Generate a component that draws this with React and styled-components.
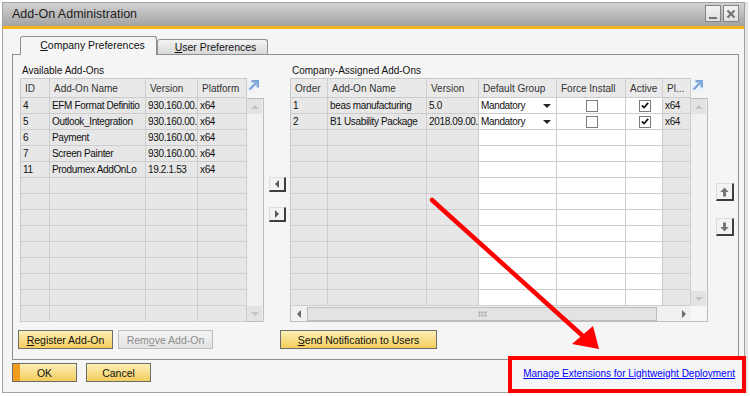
import React from "react";
import styled, { createGlobalStyle } from "styled-components";

const GlobalStyle = createGlobalStyle`
  body {
    margin: 0;
    background: #fff;
    font-family: "Liberation Sans", Arial, sans-serif;
    color: #111;
  }
`;

const leftCols = [29, 96, 52, 49];
const leftHead = ["ID", "Add-On Name", "Version", "Platform"];
const leftRows = [
  ["4", "EFM Format Definitio", "930.160.00.", "x64"],
  ["5", "Outlook_Integration", "930.160.00.", "x64"],
  ["6", "Payment", "930.160.00.", "x64"],
  ["7", "Screen Painter", "930.160.00.", "x64"],
  ["11", "Produmex AddOnLo", "19.2.1.53", "x64"],
];

const rightCols = [37, 99, 52, 78, 69, 37, 28];
const rightHead = ["Order", "Add-On Name", "Version", "Default Group", "Force Install", "Active", "Pl..."];
const rightWhite = [false, false, false, true, true, true, false];
const rightRows = [
  { order: "1", name: "beas manufacturing", version: "5.0", group: "Mandatory", force: false, active: true, pl: "x64" },
  { order: "2", name: "B1 Usability Package", version: "2018.09.00.", group: "Mandatory", force: false, active: true, pl: "x64" },
];

const Window = styled.div`
  position: relative;
  box-sizing: border-box;
  margin: 2px 0 0 2px;
  width: 743px;
  height: 391px;
  border: 1px solid #a2a2a2;
  background: #f5f5f5;
  display: flex;
  flex-direction: column;
  box-shadow: 3px 0 0 #e4e4e4;
`;

const TitleBar = styled.div`
  height: 23px;
  border-bottom: 3px solid #f6b41a;
  background: linear-gradient(#d2d2d2, #a3a3a3);
  display: flex;
  align-items: flex-start;
  padding: 0 5px 0 9px;
`;

const Title = styled.div`
  flex: 1;
  font-size: 12.5px;
  line-height: 23px;
  color: #1c1c1c;
`;

const WinButton = styled.div`
  box-sizing: border-box;
  width: 16px;
  height: 17px;
  margin: 2px 0 0 2px;
  border: 1px solid #838383;
  background: linear-gradient(#f4f4f4, #dedede);
  display: flex;
  align-items: center;
  justify-content: center;
`;

const Body = styled.div`
  flex: 1;
  padding: 7px 0 0 9px;
  display: flex;
  flex-direction: column;
`;

const TabStrip = styled.div`
  height: 18px;
  display: flex;
  align-items: flex-end;
  padding-left: 8px;
`;

const Tab = styled.div`
  position: relative;
  z-index: 1;
  box-sizing: border-box;
  width: ${(p) => p.$width}px;
  height: ${(p) => (p.$active ? 19 : 15)}px;
  margin-bottom: ${(p) => (p.$active ? -1 : 0)}px;
  border: 1px solid #8f8f8f;
  border-bottom: none;
  border-radius: 3px 3px 0 0;
  background: ${(p) => (p.$active ? "#f5f5f5" : "linear-gradient(#f3f3f3, #d9d9d9)")};
  font-size: 10.5px;
  display: flex;
  align-items: center;
  justify-content: center;
  padding-left: ${(p) => (p.$active ? 8 : 6)}px;
  padding-bottom: ${(p) => (p.$active ? 2 : 0)}px;
`;

const Panel = styled.div`
  box-sizing: border-box;
  width: 727px;
  height: 306px;
  border: 1px solid #8f8f8f;
  padding-top: 8px;
  display: flex;
  flex-direction: column;
`;

const ContentRow = styled.div`
  display: flex;
  align-items: flex-start;
  padding-left: 7px;
`;

const Section = styled.div`
  width: ${(p) => p.$width}px;
  display: flex;
  flex-direction: column;
`;

const Label = styled.div`
  font-size: 10px;
  line-height: 15px;
  padding-left: 2px;
`;

const GridFrame = styled.div`
  display: flex;
`;

const GridStack = styled.div`
  display: flex;
  flex-direction: column;
`;

const Grid = styled.div`
  display: grid;
  grid-template-columns: ${(p) => p.$cols.map((c) => c + "px").join(" ")};
  border-left: 1px solid #c9c9c9;
  border-top: 1px solid #c9c9c9;
`;

const HeadCell = styled.div`
  box-sizing: border-box;
  height: 19px;
  border-right: 1px solid #cdcdcd;
  border-bottom: 1px solid #cdcdcd;
  background: #e9e9e9;
  padding-left: 4px;
  font-size: 10px;
  color: #333;
  display: flex;
  align-items: center;
  white-space: nowrap;
  overflow: hidden;
`;

const Cell = styled.div`
  box-sizing: border-box;
  height: 16px;
  border-right: 1px solid #cdcdcd;
  border-bottom: 1px solid #cdcdcd;
  background: ${(p) => (p.$white ? "#fff" : "#e7e7e7")};
  padding: 0 1px 0 2px;
  font-size: 10px;
  letter-spacing: -0.35px;
  display: flex;
  align-items: center;
  justify-content: ${(p) => (p.$center ? "center" : "flex-start")};
  white-space: nowrap;
  overflow: hidden;
`;

const DropValue = styled.div`
  flex: 1;
  display: flex;
  align-items: center;
  justify-content: space-between;
  padding-right: 4px;
`;

const Check = styled.div`
  box-sizing: border-box;
  width: 12px;
  height: 12px;
  border: 1px solid #7b7b7b;
  background: #fff;
  display: flex;
  align-items: center;
  justify-content: center;
`;

const ScrollCol = styled.div`
  width: 17px;
  display: flex;
  flex-direction: column;
`;

const ScrollHead = styled.div`
  height: 20px;
  display: flex;
  align-items: flex-start;
  padding-top: 1px;
  box-sizing: border-box;
`;

const VTrack = styled.div`
  box-sizing: border-box;
  height: ${(p) => p.$height}px;
  border: 1px solid #bdbdbd;
  border-left: none;
  border-bottom: ${(p) => (p.$open ? "none" : "1px solid #bdbdbd")};
  background: #f1f1f1;
  display: flex;
  flex-direction: column;
  justify-content: space-between;
`;

const ScrollBtn = styled.div`
  box-sizing: border-box;
  width: ${(p) => p.$w || 15}px;
  height: ${(p) => p.$h || 15}px;
  background: ${(p) => p.$bg || "#e3e3e3"};
  display: flex;
  align-items: center;
  justify-content: center;
  flex-shrink: 0;
`;

const Corner = styled.div`
  box-sizing: border-box;
  height: 16px;
  border-right: 1px solid #bdbdbd;
  border-bottom: 1px solid #bdbdbd;
  background: #f7f7f7;
`;

const HScroll = styled.div`
  box-sizing: border-box;
  height: 16px;
  border-left: 1px solid #bdbdbd;
  border-bottom: 1px solid #bdbdbd;
  background: #f1f1f1;
  display: flex;
  align-items: center;
`;

const Thumb = styled.div`
  box-sizing: border-box;
  width: 350px;
  height: 14px;
  margin-left: 1px;
  border: 1px solid #bcbcbc;
  background: #e3e3e3;
  display: flex;
  align-items: center;
  justify-content: center;
`;

const Spacer = styled.div`
  flex: 1;
`;

const Tri = styled.div`
  width: 0;
  height: 0;
  border-style: solid;
  border-color: transparent;
  ${(p) =>
    p.$dir === "up"
      ? `border-width: 0 ${p.$s}px ${p.$s}px; border-bottom-color: ${p.$c};`
      : p.$dir === "down"
      ? `border-width: ${p.$s}px ${p.$s}px 0; border-top-color: ${p.$c};`
      : p.$dir === "left"
      ? `border-width: ${p.$s}px ${p.$s}px ${p.$s}px 0; border-right-color: ${p.$c};`
      : `border-width: ${p.$s}px 0 ${p.$s}px ${p.$s}px; border-left-color: ${p.$c};`}
`;

const MoveCol = styled.div`
  width: ${(p) => p.$width}px;
  display: flex;
  flex-direction: column;
  padding-left: ${(p) => p.$pad}px;
  padding-top: ${(p) => p.$top}px;
  gap: ${(p) => p.$gap}px;
  box-sizing: border-box;
`;

const MoveBtn = styled.div`
  box-sizing: border-box;
  width: ${(p) => p.$w}px;
  height: ${(p) => p.$h}px;
  background: #f3f3f3;
  border-top: 1px solid #dcdcdc;
  border-left: 1px solid #dcdcdc;
  border-right: 2px solid #3e3e3e;
  border-bottom: 2px solid #3e3e3e;
  display: flex;
  align-items: center;
  justify-content: center;
`;

const ButtonRow = styled.div`
  display: flex;
  gap: 5px;
  padding-left: 5px;
  margin-top: 8px;
`;

const Button = styled.div`
  box-sizing: border-box;
  width: ${(p) => p.$width}px;
  height: 19px;
  margin-left: ${(p) => p.$gapLeft || 0}px;
  border: 1px solid ${(p) => (p.$disabled ? "#bcbcbc" : "#6c6c6c")};
  background: ${(p) =>
    p.$disabled
      ? "linear-gradient(#f4f4f4, #e2e2e2)"
      : p.$default
      ? "linear-gradient(90deg, #f59e1c 0, #ef9a1e 7px, transparent 7px), linear-gradient(#fcefb8, #f4cd5a)"
      : "linear-gradient(#fcefb8, #f4cd5a)"};
  color: ${(p) => (p.$disabled ? "#8c8c8c" : "#111")};
  font-size: 10.5px;
  display: flex;
  align-items: center;
  justify-content: center;
  white-space: nowrap;
`;

const Footer = styled.div`
  display: flex;
  align-items: center;
  padding: 3px 9px 0 0;
  gap: 9px;
`;

const Link = styled.a`
  margin-left: auto;
  margin-top: 1px;
  font-size: 10px;
  color: #0000ff;
  text-decoration: underline;
  cursor: pointer;
`;

const Highlight = styled.div`
  position: absolute;
  left: 505px;
  top: 353px;
  width: 238px;
  height: 37px;
  box-sizing: border-box;
  border: 4px solid #ff0000;
  pointer-events: none;
`;

const Annotation = styled.svg`
  position: absolute;
  left: -3px;
  top: -3px;
  pointer-events: none;
`;

function ExpandIcon() {
  return (
    <svg width="13" height="13" viewBox="0 0 13 13">
      <rect x="0" y="0" width="13" height="13" fill="#eef3fa" />
      <path d="M2.5 10.5 L9.5 3.5" stroke="#7ea6d8" strokeWidth="2.4" />
      <path d="M4.5 2.2 H10.8 V8.5" stroke="#7ea6d8" strokeWidth="2.4" fill="none" />
    </svg>
  );
}

function CheckMark() {
  return (
    <svg width="8" height="7" viewBox="0 0 8 7">
      <path d="M0.8 3.4 L3 5.6 L7.2 0.9" stroke="#111" strokeWidth="1.6" fill="none" />
    </svg>
  );
}

function ArrowIcon({ down }) {
  return (
    <svg width="9" height="10" viewBox="0 0 9 10" style={down ? { transform: "rotate(180deg)" } : undefined}>
      <path d="M4.5 0.5 L8.7 5 H6 V9.5 H3 V5 H0.3 Z" fill="#767676" />
    </svg>
  );
}

function Mnemonic({ text, at }) {
  return (
    <span>
      {text.slice(0, at)}
      <u>{text[at]}</u>
      {text.slice(at + 1)}
    </span>
  );
}

function VScroll({ height, open }) {
  return (
    <VTrack $height={height} $open={open}>
      <ScrollBtn>
        <Tri $dir="up" $s={4} $c="#c4c4c4" />
      </ScrollBtn>
      <ScrollBtn>
        <Tri $dir="down" $s={4} $c="#c4c4c4" />
      </ScrollBtn>
    </VTrack>
  );
}

function AvailableGrid() {
  const empty = Array.from({ length: 14 - leftRows.length });
  return (
    <GridFrame>
      <Grid $cols={leftCols}>
        {leftHead.map((h) => (
          <HeadCell key={h}>{h}</HeadCell>
        ))}
        {leftRows.map((r) => r.map((v, i) => <Cell key={r[0] + i}>{v}</Cell>))}
        {empty.map((_, k) => leftCols.map((c, i) => <Cell key={"e" + k + i} />))}
      </Grid>
      <ScrollCol>
        <ScrollHead>
          <ExpandIcon />
        </ScrollHead>
        <VScroll height={224} />
      </ScrollCol>
    </GridFrame>
  );
}

function AssignedGrid() {
  const empty = Array.from({ length: 13 - rightRows.length });
  return (
    <GridFrame>
      <GridStack>
        <Grid $cols={rightCols}>
          {rightHead.map((h) => (
            <HeadCell key={h}>{h}</HeadCell>
          ))}
          {rightRows.map((r) => (
            <React.Fragment key={r.order}>
              <Cell>{r.order}</Cell>
              <Cell>{r.name}</Cell>
              <Cell>{r.version}</Cell>
              <Cell $white>
                <DropValue>
                  {r.group}
                  <Tri $dir="down" $s={4} $c="#222" />
                </DropValue>
              </Cell>
              <Cell $white $center>
                <Check>{r.force && <CheckMark />}</Check>
              </Cell>
              <Cell $white $center>
                <Check>{r.active && <CheckMark />}</Check>
              </Cell>
              <Cell>{r.pl}</Cell>
            </React.Fragment>
          ))}
          {empty.map((_, k) =>
            rightCols.map((c, i) => <Cell key={"e" + k + i} $white={rightWhite[i]} />)
          )}
        </Grid>
        <HScroll>
          <ScrollBtn $w={15} $h={14} $bg="#f1f1f1">
            <Tri $dir="left" $s={4} $c="#6a6a6a" />
          </ScrollBtn>
          <Thumb>
            <svg width="9" height="6" viewBox="0 0 9 6">
              {[0, 3, 6].map((x) =>
                [0, 3].map((y) => <rect key={x + "-" + y} x={x + 0.5} y={y + 0.5} width="2" height="2" fill="#a9a9a9" />)
              )}
            </svg>
          </Thumb>
          <Spacer />
          <ScrollBtn $w={15} $h={14} $bg="#f1f1f1">
            <Tri $dir="right" $s={4} $c="#6a6a6a" />
          </ScrollBtn>
        </HScroll>
      </GridStack>
      <ScrollCol>
        <ScrollHead>
          <ExpandIcon />
        </ScrollHead>
        <VScroll height={208} open />
        <Corner />
      </ScrollCol>
    </GridFrame>
  );
}

export default function App() {
  return (
    <>
      <GlobalStyle />
      <Window>
        <TitleBar>
          <Title>Add-On Administration</Title>
          <WinButton>
            <svg width="10" height="12" viewBox="0 0 10 12">
              <rect x="1" y="9" width="8" height="2" fill="#707070" />
            </svg>
          </WinButton>
          <WinButton>
            <svg width="10" height="10" viewBox="0 0 10 10">
              <path d="M1.5 1.5 L8.5 8.5 M8.5 1.5 L1.5 8.5" stroke="#707070" strokeWidth="2" />
            </svg>
          </WinButton>
        </TitleBar>

        <Body>
          <TabStrip>
            <Tab $active $width={137}>
              <Mnemonic text="Company Preferences" at={0} />
            </Tab>
            <Tab $width={111}>
              <Mnemonic text="User Preferences" at={0} />
            </Tab>
          </TabStrip>

          <Panel>
            <ContentRow>
              <Section $width={244}>
                <Label>Available Add-Ons</Label>
                <AvailableGrid />
              </Section>

              <MoveCol $width={26} $pad={5} $top={114} $gap={15}>
                <MoveBtn $w={17} $h={15}>
                  <Tri $dir="left" $s={4} $c="#5a5a5a" />
                </MoveBtn>
                <MoveBtn $w={17} $h={15}>
                  <Tri $dir="right" $s={4} $c="#5a5a5a" />
                </MoveBtn>
              </MoveCol>

              <Section $width={418}>
                <Label>Company-Assigned Add-Ons</Label>
                <AssignedGrid />
              </Section>

              <MoveCol $width={30} $pad={8} $top={120} $gap={17}>
                <MoveBtn $w={18} $h={18}>
                  <ArrowIcon />
                </MoveBtn>
                <MoveBtn $w={18} $h={18}>
                  <ArrowIcon down />
                </MoveBtn>
              </MoveCol>
            </ContentRow>

            <ButtonRow>
              <Button $width={95}>
                <Mnemonic text="Register Add-On" at={0} />
              </Button>
              <Button $width={95} $disabled>
                <Mnemonic text="Remove Add-On" at={3} />
              </Button>
              <Button $width={157} $gapLeft={62}>
                <Mnemonic text="Send Notification to Users" at={0} />
              </Button>
            </ButtonRow>
          </Panel>

          <Footer>
            <Button $width={65} $default>OK</Button>
            <Button $width={65}>Cancel</Button>
            <Link>Manage Extensions for Lightweight Deployment</Link>
          </Footer>
        </Body>

        <Highlight />
        <Annotation width="750" height="396" viewBox="0 0 750 396">
          <path d="M432 200 L584 337" stroke="#ff0000" strokeWidth="4.5" strokeLinecap="round" />
          <polygon points="599,349 572,344 593,326" fill="#ff0000" />
        </Annotation>
      </Window>
    </>
  );
}
